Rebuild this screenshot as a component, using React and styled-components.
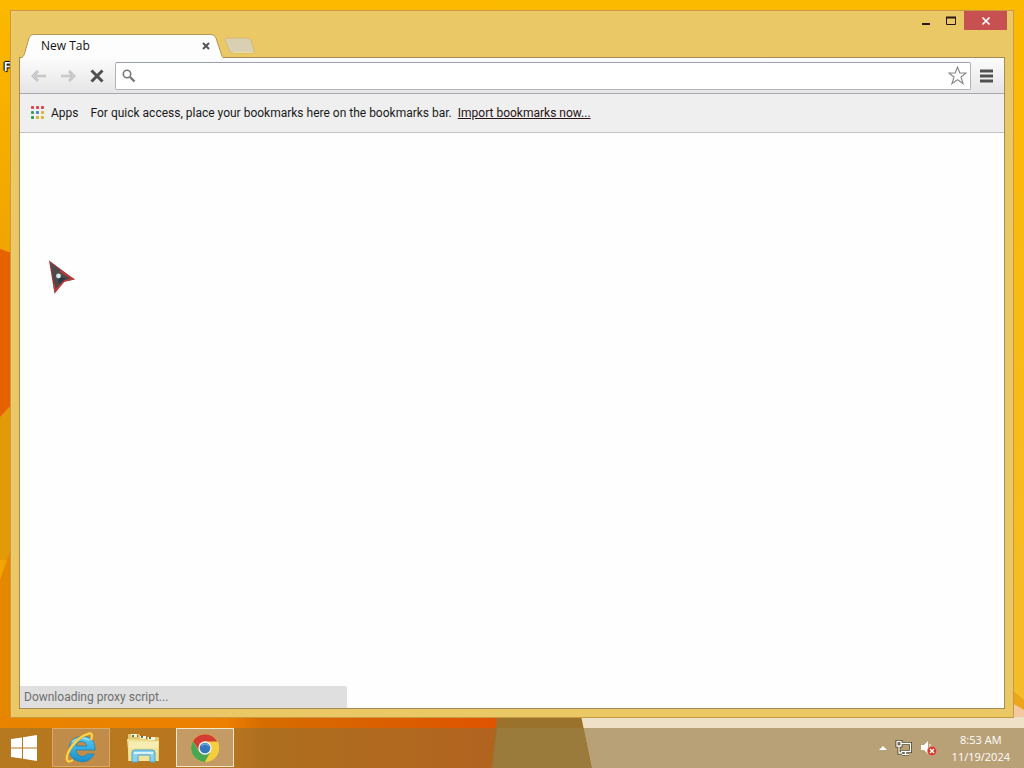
import React from 'react';
import styled, { createGlobalStyle } from 'styled-components';

const Global = createGlobalStyle`
  * { box-sizing: border-box; }
  body { margin: 0; }
  body, button, input { font-family: Roboto, "Open Sans", sans-serif; font-size: 12px; line-height: 16px; }
  button { padding: 0; border: 0; background: none; color: inherit; }
`;

const Desktop = styled.div`
  position: relative;
  isolation: isolate;
  display: flex;
  flex-direction: column;
  min-height: 100vh;
  overflow: hidden;
  background: #fbb900;
`;

const Wallpaper = styled.svg`
  position: absolute;
  inset: 0;
  width: 100%;
  height: 100%;
  z-index: -2;
`;

const ShortcutLabel = styled.span`
  position: absolute;
  left: 4px;
  top: 59px;
  z-index: -1;
  color: #fff;
  font-size: 12px;
  font-weight: 700;
  line-height: 16px;
  text-shadow: 0 0 1px #000, 1px 1px 1px #000, -1px 0 1px #000, 0 -1px 1px #000;
`;

const Workspace = styled.main`
  flex: 1;
  display: flex;
  padding: 10px;
`;

const Window = styled.section`
  flex: 1;
  display: flex;
  flex-direction: column;
  min-width: 0;
  padding-bottom: 8px;
  border: 1px solid #c99842;
  background: #ebc866;
  box-shadow: inset 1px 1px 0 #f3c96c;
`;

const TitleBar = styled.header`
  display: flex;
  justify-content: space-between;
  height: 46px;
  padding: 0 6px 0 9px;
`;

const TabStrip = styled.div`
  display: flex;
  align-items: flex-end;
  position: relative;
  z-index: 1;
`;

const Tab = styled.div`
  position: relative;
  display: flex;
  align-items: center;
  justify-content: space-between;
  width: 204px;
  height: 24px;
  padding: 0 13px 0 21px;
  margin-bottom: -1px;
  color: #111;
  font-family: "Open Sans", "Noto Sans", sans-serif;
`;

const TabShape = styled.svg`
  position: absolute;
  left: 0;
  top: 0;
  z-index: -1;
`;

const TabClose = styled.button`
  display: flex;
  width: 12px;
  height: 12px;
  margin-right: -1px;
  align-items: center;
  justify-content: center;
`;

const NewTab = styled.button`
  display: flex;
  height: 20px;
`;

const Controls = styled.div`
  display: flex;
  height: 19px;
`;

const Control = styled.button`
  display: flex;
  align-items: center;
  justify-content: center;
  width: ${p => (p.$close ? 43 : 26)}px;
  height: 19px;
  background: ${p => (p.$close ? '#c75050' : 'transparent')};
`;

const Browser = styled.div`
  flex: 1;
  display: flex;
  flex-direction: column;
  margin: 0 8px;
  border: 1px solid #a58a52;
  background: #fff;
`;

const Toolbar = styled.div`
  display: flex;
  align-items: center;
  height: 36px;
  padding: 0 4px 0 5px;
  gap: 1px;
  border-bottom: 1px solid #a9a9ab;
  background: linear-gradient(#fcfcfc, #e5e5e7);
`;

const ToolButton = styled.button`
  display: flex;
  align-items: center;
  justify-content: center;
  width: 28px;
  height: 28px;
`;

const Omnibox = styled.label`
  flex: 1;
  display: flex;
  align-items: center;
  height: 28px;
  padding: 0 3px 0 5px;
  margin-left: 3px;
  border: 1px solid #b3b3b5;
  border-top-color: #9aa0ad;
  border-radius: 2px;
  background: #fff;
`;

const Address = styled.input`
  flex: 1;
  min-width: 0;
  height: 22px;
  border: 0;
  outline: 0;
  background: transparent;
`;

const Star = styled.button`
  display: flex;
`;

const Bookmarks = styled.nav`
  display: flex;
  align-items: center;
  height: 39px;
  padding: 0 10px;
  border-bottom: 1px solid #c3c3c3;
  background: #efefef;
  color: #1a1a1a;
  white-space: nowrap;
`;

const Apps = styled.button`
  display: flex;
  align-items: center;
  gap: 6px;
  margin-right: 12px;
`;

const ImportLink = styled.a`
  margin-left: 6px;
  color: #2a1216;
`;

const Page = styled.div`
  flex: 1;
  display: flex;
  align-items: flex-end;
  background: #fefefe;
`;

const Status = styled.div`
  width: 327px;
  height: 22px;
  padding: 3px 4px;
  border-top-right-radius: 2px;
  background: #dfdfdf;
  color: #6e6e6e;
`;

const Cursor = styled.svg`
  position: absolute;
  left: 48px;
  top: 260px;
`;

const Taskbar = styled.footer`
  display: flex;
  height: 40px;
  background: rgba(143, 113, 56, 0.56);
`;

const TaskButton = styled.button`
  display: flex;
  align-items: center;
  justify-content: center;
  width: 58px;
  height: 39px;
  margin-right: 4px;
  border: 1px solid ${p => (p.$active ? '#f3e6cc' : p.$open ? '#d7aa6a' : 'transparent')};
  background: ${p => (p.$active ? '#c49b65' : p.$open ? '#c18b49' : 'transparent')};
`;

const Start = styled(TaskButton)`
  width: 48px;
`;

const Tray = styled.div`
  display: flex;
  align-items: center;
  gap: 7px;
  margin-left: auto;
  padding-right: 14px;
  color: #fff;
`;

const TrayButton = styled.button`
  display: flex;
`;

const Clock = styled.time`
  margin-left: 7px;
  text-align: center;
  font-family: "Open Sans", "Noto Sans", sans-serif;
  font-size: 11px;
  line-height: 17px;
`;

const dots = ['#d9434e', '#d9434e', '#d9434e', '#3c9a5f', '#4a86c8', '#e0b12c', '#2f9a55', '#e0b12c', '#e0b12c'];

function AppsIcon() {
  return (
    <svg width="15" height="15" viewBox="0 0 15 15" aria-hidden="true">
      {dots.map((c, i) => (
        <rect key={i} x={1 + (i % 3) * 5} y={Math.floor(i / 3) * 5} width="3" height="3" rx="1" fill={c} />
      ))}
    </svg>
  );
}

function Scenery() {
  return (
    <Wallpaper viewBox="0 0 1024 768" preserveAspectRatio="none" aria-hidden="true">
      <defs>
        <linearGradient id="side" x1="0" y1="0" x2="0" y2="1">
          <stop offset="0" stopColor="#fcb900" />
          <stop offset="0.32" stopColor="#f0a500" />
        </linearGradient>
        <linearGradient id="right" x1="0" y1="0" x2="0" y2="1">
          <stop offset="0" stopColor="#fbb900" />
          <stop offset="1" stopColor="#f3bd30" />
        </linearGradient>
        <linearGradient id="low" x1="0" y1="0" x2="1" y2="0">
          <stop offset="0" stopColor="#e88400" />
          <stop offset="0.45" stopColor="#ee8000" />
          <stop offset="0.52" stopColor="#d66d00" />
          <stop offset="1" stopColor="#df5300" />
        </linearGradient>
      </defs>
      <rect width="500" height="768" fill="url(#side)" />
      <rect width="1024" height="12" fill="#fcb900" />
      <rect x="500" width="524" height="768" fill="url(#right)" />
      <path d="M0 249L12 253V420H0Z" fill="#e66200" />
      <path d="M0 417L12 404V560H0Z" fill="#e39a08" />
      <path d="M0 580L12 545V720H0Z" fill="#e68700" />
      <rect y="715" width="500" height="53" fill="url(#low)" />
      <path d="M497 715H581L592 768H492Z" fill="#9b722c" />
      <path d="M497 728H583L592 768H492Z" fill="#a88a40" />
      <path d="M581 715H1024V768H592Z" fill="#efe0c8" />
      <path d="M1012 695L1024 707V717H1012Z" fill="#f5c9a0" />
      <path d="M1012 690L1024 700V710L1012 703Z" fill="#eca61e" />
    </Wallpaper>
  );
}

function Arrow({ flip }) {
  return (
    <svg width="18" height="14" viewBox="0 0 18 14" fill="none" aria-hidden="true">
      <path d={flip ? 'M2 7H15M10 2L15 7L10 12' : 'M16 7H3M8 2L3 7L8 12'} stroke="#bdbdbd" strokeWidth="2.6" />
      <path d={flip ? 'M2 7H15M10 2L15 7L10 12' : 'M16 7H3M8 2L3 7L8 12'} stroke="#d6d6d6" />
    </svg>
  );
}

function Explorer() {
  return (
    <svg width="34" height="32" viewBox="0 0 34 32" aria-hidden="true">
      <path d="M2 3Q2 2 3 2H13L15 5H32Q33 5 33 6V29H2Z" fill="#e2c66c" />
      <path d="M5 2H11V5H5ZM14 4H20V7H14ZM22 5H29V8H22Z" fill="#f8f4d8" />
      <path d="M6 3H8V5H6ZM15 4H17V6H15ZM23 5H25V7H23Z" fill="#48764a" />
      <path d="M11 3H12V5H11ZM20 5H21V7H20Z" fill="#c54d34" />
      <path d="M1 7L33 9L32 29H3Z" fill="#f2e39a" />
      <path d="M3 10H32V16H3Z" fill="#f7ecb4" />
      <path d="M6 30V21Q6 18 9 18H26Q29 18 29 21V30H24V24Q24 23 23 23H13Q12 23 12 24V30Z" fill="#8ed1ec" stroke="#4da5cd" />
      <path d="M8 21H27" stroke="#d9f3fb" strokeWidth="2" />
    </svg>
  );
}

function InternetExplorer() {
  return (
    <svg width="34" height="34" viewBox="0 0 34 34" fill="none" aria-hidden="true">
      <defs>
        <linearGradient id="ie" x1="0" y1="0" x2="0" y2="1">
          <stop stopColor="#58c9f3" /><stop offset="1" stopColor="#188fcb" />
        </linearGradient>
      </defs>
      <path d="M31 19H12C12 26 21 27 23 23H30C27 30 20 32 14 30C2 27 2 9 14 6C24 3 32 9 31 19ZM12 15H23C22 9 13 9 12 15Z" fill="url(#ie)" stroke="#1686bd" strokeWidth=".8" />
      <path d="M8 11C12 7 20 6 25 9" stroke="#9be4fb" strokeWidth="1.5" />
      <path d="M27 9C29 4 28 1 24 3C15 5 5 17 3 25C2 30 4 32 9 29" stroke="#dc9d18" strokeWidth="3" />
      <path d="M27 9C29 4 28 1 24 3C15 5 5 17 3 25C2 30 4 32 9 29" stroke="#fbd556" strokeWidth="2" />
    </svg>
  );
}

function Chrome() {
  return (
    <svg width="30" height="30" viewBox="0 0 30 30" aria-hidden="true">
      <circle cx="15" cy="15" r="14" fill="#f3cf3e" />
      <path d="M2.9 8A14 14 0 0 0 15 29L21 18.5L9 18.5Z" fill="#4aa652" />
      <path d="M15 8.5H27.5A14 14 0 0 1 15 29L20.6 18.3Z" fill="#f3cf3e" />
      <path d="M15 8.5H27.3A14 14 0 0 0 3 8L9.4 18.3Z" fill="#d33d33" />
      <circle cx="15" cy="15" r="6.7" fill="#f5f2e8" />
      <circle cx="15" cy="15" r="5.3" fill="#3477bd" />
      <path d="M11 13A5 5 0 0 1 19 13" stroke="#6da7dc" strokeWidth="1.5" fill="none" />
    </svg>
  );
}

export default function App() {
  return (
    <Desktop>
      <Global />
      <Scenery />
      <ShortcutLabel>F</ShortcutLabel>
      <Workspace>
        <Window>
          <TitleBar>
            <TabStrip>
              <Tab>
                <TabShape width="204" height="25" viewBox="0 0 204 25" aria-hidden="true">
                  <path d="M0 24.500C4 23 4 21 5 18L9 4Q10 .5 13 .5H191Q195 .5 196 4L201 19Q203 24.500 204 24.500V25H0Z" fill="#fdfdfd" />
                  <path d="M0 24C4 23 4 21 5 18L9 4Q10 .5 13 .5H191Q195 .5 196 4L201 19Q202 24 204 24" fill="none" stroke="#b69452" />
                </TabShape>
                <span>New Tab</span>
                <TabClose aria-label="Close tab">
                  <svg width="8" height="8" viewBox="0 0 8 8"><path d="M1 1L7 7M7 1L1 7" stroke="#555" strokeWidth="2" /></svg>
                </TabClose>
              </Tab>
              <NewTab aria-label="New tab">
                <svg width="32" height="18" viewBox="0 0 32 18">
                  <path d="M3 1H24Q26 1 27 3L30 13Q31 16 29 16H9Q6 16 5 13L1 3Q1 1 3 1Z" fill="#d9d0b4" stroke="#d9b869" />
                  <path d="M9 15.500H29" stroke="#f2dda0" />
                </svg>
              </NewTab>
            </TabStrip>
            <Controls>
              <Control aria-label="Minimize">
                <svg width="12" height="12" viewBox="0 0 12 12"><path d="M3 9H11" stroke="#2a1608" strokeWidth="2" /></svg>
              </Control>
              <Control aria-label="Maximize">
                <svg width="12" height="12" viewBox="0 0 12 12"><path d="M1.500 2.500H10.500V9.500H1.500Z" fill="none" stroke="#2a1608" /><path d="M1 2.500H11" stroke="#2a1608" strokeWidth="2" /></svg>
              </Control>
              <Control $close aria-label="Close">
                <svg width="10" height="10" viewBox="0 0 10 10"><path d="M1.500 1.500L8.500 8.500M8.500 1.500L1.500 8.500" stroke="#fff" strokeWidth="1.700" /></svg>
              </Control>
            </Controls>
          </TitleBar>
          <Browser>
            <Toolbar>
              <ToolButton aria-label="Back"><Arrow /></ToolButton>
              <ToolButton aria-label="Forward"><Arrow flip /></ToolButton>
              <ToolButton aria-label="Stop">
                <svg width="14" height="14" viewBox="0 0 14 14"><path d="M1.500 1.500L12.500 12.500M12.500 1.500L1.500 12.500" stroke="#4f4f4f" strokeWidth="3" /></svg>
              </ToolButton>
              <Omnibox>
                <svg width="15" height="15" viewBox="0 0 15 15" fill="none" aria-hidden="true">
                  <circle cx="6" cy="6" r="3.700" stroke="#777" strokeWidth="1.600" /><path d="M9 9L13.500 13.500" stroke="#777" strokeWidth="2.400" />
                </svg>
                <Address aria-label="Address and search" />
                <Star type="button" aria-label="Bookmark this page">
                  <svg width="19" height="19" viewBox="0 0 19 19"><path d="M9.500 1L11.800 7H18L13 11L15 17.500L9.500 13.700L4 17.500L6 11L1 7H7.200Z" fill="#fff" stroke="#8b8b8b" strokeWidth="1.200" /></svg>
                </Star>
              </Omnibox>
              <ToolButton aria-label="Menu">
                <svg width="14" height="14" viewBox="0 0 14 14"><path d="M1 2H14M1 7H14M1 12H14" stroke="#505050" strokeWidth="3" /></svg>
              </ToolButton>
            </Toolbar>
            <Bookmarks>
              <Apps><AppsIcon />Apps</Apps>
              <span>For quick access, place your bookmarks here on the bookmarks bar.</span>
              <ImportLink href="#">Import bookmarks now...</ImportLink>
            </Bookmarks>
            <Page><Status>Downloading proxy script...</Status></Page>
          </Browser>
        </Window>
      </Workspace>
      <Taskbar>
        <Start aria-label="Start">
          <svg width="28" height="26" viewBox="0 0 28 26"><path d="M1 4L12 2.500V12.500H1ZM13 2.300L27 0V12.500H13ZM1 13.500H12V23.500L1 22ZM13 13.500H27V26L13 23.700Z" fill="#fff" /></svg>
        </Start>
        <TaskButton $open aria-label="Internet Explorer"><InternetExplorer /></TaskButton>
        <TaskButton aria-label="File Explorer"><Explorer /></TaskButton>
        <TaskButton $active aria-label="Google Chrome"><Chrome /></TaskButton>
        <Tray>
          <TrayButton aria-label="Show hidden icons">
            <svg width="10" height="6" viewBox="0 0 10 6"><path d="M1 5L5 1L9 5Z" fill="#fff" /></svg>
          </TrayButton>
          <TrayButton aria-label="Network">
            <svg width="18" height="16" viewBox="0 0 18 16" fill="none"><path d="M6 3.500H15.500V11.500H6M10.500 12V15M7 14.500H14M2 1.500H6V6H2ZM4 6V13H7" stroke="#4d4029" strokeWidth="3" /><path d="M6 3.500H15.500V11.500H6M10.500 12V15M7 14.500H14M2 1.500H6V6H2ZM4 6V13H7" stroke="#fff" strokeWidth="1.300" /></svg>
          </TrayButton>
          <TrayButton aria-label="Volume muted">
            <svg width="18" height="18" viewBox="0 0 18 18" fill="none"><path d="M1 6H4L8 2V15L4 11H1Z" fill="#fff" /><path d="M10 5V8" stroke="#fff" /><circle cx="12" cy="12" r="4.700" fill="#cf3b2c" stroke="#e9a08c" strokeWidth=".6" /><path d="M10 10L14 14M14 10L10 14" stroke="#fff" strokeWidth="1.500" /></svg>
          </TrayButton>
          <Clock>8:53 AM<br />11/19/2024</Clock>
        </Tray>
      </Taskbar>
      <Cursor width="28" height="34" viewBox="0 0 28 34" aria-hidden="true">
        <path d="M2 2L25 19L16 21L7 32Z" fill="#4d4a4c" stroke="#8d3a3c" strokeWidth="1.500" />
        <path d="M12 11L25 19L16 21L7 31L6 24" fill="none" stroke="#c23a3e" strokeWidth="1.500" />
        <path d="M9 15L18 19L11 24Z" fill="#2b3b40" />
        <circle cx="10.500" cy="16" r="2.400" fill="#d6e6ea" />
      </Cursor>
    </Desktop>
  );
}
